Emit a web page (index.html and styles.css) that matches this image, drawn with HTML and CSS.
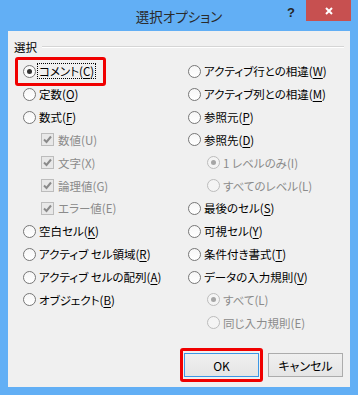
FILE: index.html
```
<!DOCTYPE html>
<html lang="ja">
<head>
    <meta charset="UTF-8">
    <meta name="viewport" content="width=device-width, initial-scale=1.0">
    <title>選択オプション</title>
    <link rel="stylesheet" href="styles.css">
</head>
<body>

<div class="window">
    <!-- タイトルバー -->
    <div class="titlebar">
        <span></span>
        <div class="title">選択オプション</div>
        <div class="controls">
            <span class="help">?</span>
            <span class="close">
                <svg width="8" height="8" viewBox="0 0 8 8"><path d="M1 1L7 7M7 1L1 7" stroke="#fff" stroke-width="2"/></svg>
            </span>
        </div>
    </div>

    <div class="content">
        <div class="group-head">
            <span>選択</span>
            <div class="rule"></div>
        </div>

        <div class="columns">
            <!-- 左の列 -->
            <ul class="col">
                <li class="opt marked"><span class="radio on"></span><span class="label focus">コメント(<u>C</u>)</span></li>
                <li class="opt"><span class="radio"></span><span class="label">定数(<u>O</u>)</span></li>
                <li class="opt"><span class="radio"></span><span class="label">数式(<u>F</u>)</span></li>
                <li class="opt sub off"><span class="check"><svg width="11" height="11" viewBox="0 0 11 11"><path d="M2 5.5L4.5 8L9 2.5" fill="none" stroke="#8a8a8a" stroke-width="2"/></svg></span><span class="label">数値(U)</span></li>
                <li class="opt sub off"><span class="check"><svg width="11" height="11" viewBox="0 0 11 11"><path d="M2 5.5L4.5 8L9 2.5" fill="none" stroke="#8a8a8a" stroke-width="2"/></svg></span><span class="label">文字(X)</span></li>
                <li class="opt sub off"><span class="check"><svg width="11" height="11" viewBox="0 0 11 11"><path d="M2 5.5L4.5 8L9 2.5" fill="none" stroke="#8a8a8a" stroke-width="2"/></svg></span><span class="label">論理値(G)</span></li>
                <li class="opt sub off"><span class="check"><svg width="11" height="11" viewBox="0 0 11 11"><path d="M2 5.5L4.5 8L9 2.5" fill="none" stroke="#8a8a8a" stroke-width="2"/></svg></span><span class="label">エラー値(E)</span></li>
                <li class="opt"><span class="radio"></span><span class="label">空白セル(<u>K</u>)</span></li>
                <li class="opt"><span class="radio"></span><span class="label">アクティブ セル領域(<u>R</u>)</span></li>
                <li class="opt"><span class="radio"></span><span class="label">アクティブ セルの配列(<u>A</u>)</span></li>
                <li class="opt"><span class="radio"></span><span class="label">オブジェクト(<u>B</u>)</span></li>
            </ul>

            <!-- 右の列 -->
            <ul class="col">
                <li class="opt"><span class="radio"></span><span class="label">アクティブ行との相違(<u>W</u>)</span></li>
                <li class="opt"><span class="radio"></span><span class="label">アクティブ列との相違(<u>M</u>)</span></li>
                <li class="opt"><span class="radio"></span><span class="label">参照元(<u>P</u>)</span></li>
                <li class="opt"><span class="radio"></span><span class="label">参照先(<u>D</u>)</span></li>
                <li class="opt sub off"><span class="radio on"></span><span class="label">1 レベルのみ(I)</span></li>
                <li class="opt sub off"><span class="radio"></span><span class="label">すべてのレベル(L)</span></li>
                <li class="opt"><span class="radio"></span><span class="label">最後のセル(<u>S</u>)</span></li>
                <li class="opt"><span class="radio"></span><span class="label">可視セル(<u>Y</u>)</span></li>
                <li class="opt"><span class="radio"></span><span class="label">条件付き書式(<u>T</u>)</span></li>
                <li class="opt"><span class="radio"></span><span class="label">データの入力規則(<u>V</u>)</span></li>
                <li class="opt sub off"><span class="radio on"></span><span class="label">すべて(L)</span></li>
                <li class="opt sub off"><span class="radio"></span><span class="label">同じ入力規則(E)</span></li>
            </ul>
        </div>

        <div class="buttons">
            <span class="mark-btn"><button class="btn default">OK</button></span>
            <button class="btn">キャンセル</button>
        </div>
    </div>
</div>

</body>
</html>
```

FILE: styles.css
```
body {
    margin: 0;
    padding: 0;
    font-family: "Noto Sans CJK JP", sans-serif;
    font-feature-settings: "palt";
    font-size: 11.5px;
    color: #000;
}
.window {
    width: 358px;
    height: 395px;
    box-sizing: border-box;
    padding: 0 8px 8px;
    background-color: #62aff5;
    display: flex;
    flex-direction: column;
}
.titlebar {
    height: 31px;
    margin: 0 -8px;
    display: grid;
    grid-template-columns: 1fr auto 1fr;
}
.title {
    font-size: 13.5px;
    line-height: 31px;
    color: #2a2a2a;
    padding-top: 1px;
}
.controls {
    display: flex;
    justify-content: flex-end;
    align-items: flex-start;
    margin-right: 7px;
}
.help {
    font-family: "Liberation Sans", sans-serif;
    font-weight: bold;
    font-size: 13px;
    line-height: 13px;
    color: #262626;
    margin-top: 6px;
    margin-right: 11px;
}
.close {
    width: 45px;
    height: 21px;
    background-color: #c75050;
    display: flex;
    align-items: center;
    justify-content: center;
}
.content {
    flex: 1;
    background-color: #f0f0f0;
    display: flex;
    flex-direction: column;
    padding-top: 8px;
}
.group-head {
    display: flex;
    align-items: center;
    gap: 5px;
    padding: 0 6px 0 6px;
    line-height: 16px;
}
.rule {
    flex: 1;
    border-top: 1px solid #d5d5d5;
    border-bottom: 1px solid #fff;
}
.columns {
    display: grid;
    grid-template-columns: 165px 1fr;
    padding-left: 15px;
    margin-top: 5px;
}
.col {
    list-style: none;
    margin: 0;
    padding: 0;
}
.opt {
    height: 22.85px;
    display: flex;
    align-items: center;
    position: relative;
    white-space: nowrap;
}
.opt.sub {
    padding-left: 18px;
}
.col + .col .opt.sub {
    padding-left: 19px;
}
.opt.off {
    color: #8b8b8b;
}
.radio {
    width: 13px;
    height: 13px;
    box-sizing: border-box;
    border: 1px solid #777;
    border-radius: 50%;
    background: linear-gradient(#f6f6f6, #fff);
    margin-right: 3px;
    position: relative;
    flex: none;
}
.radio.on::after {
    content: "";
    position: absolute;
    left: 3px;
    top: 3px;
    width: 5px;
    height: 5px;
    border-radius: 50%;
    background-color: #333;
}
.off .radio {
    border-color: #bcbcbc;
    background: #f4f4f4;
}
.off .radio.on::after {
    background-color: #a6a6a6;
}
.check {
    width: 13px;
    height: 13px;
    box-sizing: border-box;
    border: 1px solid #bcbcbc;
    background-color: #e8e8e8;
    margin-right: 4px;
    display: flex;
    align-items: center;
    justify-content: center;
    flex: none;
}
.label {
    line-height: 14px;
}
.label u {
    text-decoration-thickness: 1px;
    text-underline-offset: 2px;
}
.focus {
    outline: 1px dotted #000;
    padding: 0 1px;
    margin-left: -1px;
}
/* 赤い枠の注記 */
.marked::before {
    content: "";
    position: absolute;
    left: -8px;
    top: -3px;
    width: 91px;
    height: 29px;
    box-sizing: border-box;
    border: 3px solid #f00000;
    border-radius: 3px;
}
.buttons {
    margin-top: auto;
    display: flex;
    justify-content: flex-end;
    align-items: center;
    gap: 5px;
    padding: 0 7px 5px 0;
}
.mark-btn {
    display: flex;
    padding: 2px 1px;
    border: 3px solid #f00000;
    border-radius: 3px;
}
.btn {
    width: 75px;
    height: 24px;
    box-sizing: border-box;
    border: 1px solid #acacac;
    background: linear-gradient(#f0f0f0, #e5e5e5);
    font-family: "Noto Sans CJK JP", sans-serif;
    font-feature-settings: "palt";
    font-size: 12px;
    color: #000;
    padding: 0;
    border-radius: 0;
}
.btn.default {
    border-color: #3c97e6;
}
```
